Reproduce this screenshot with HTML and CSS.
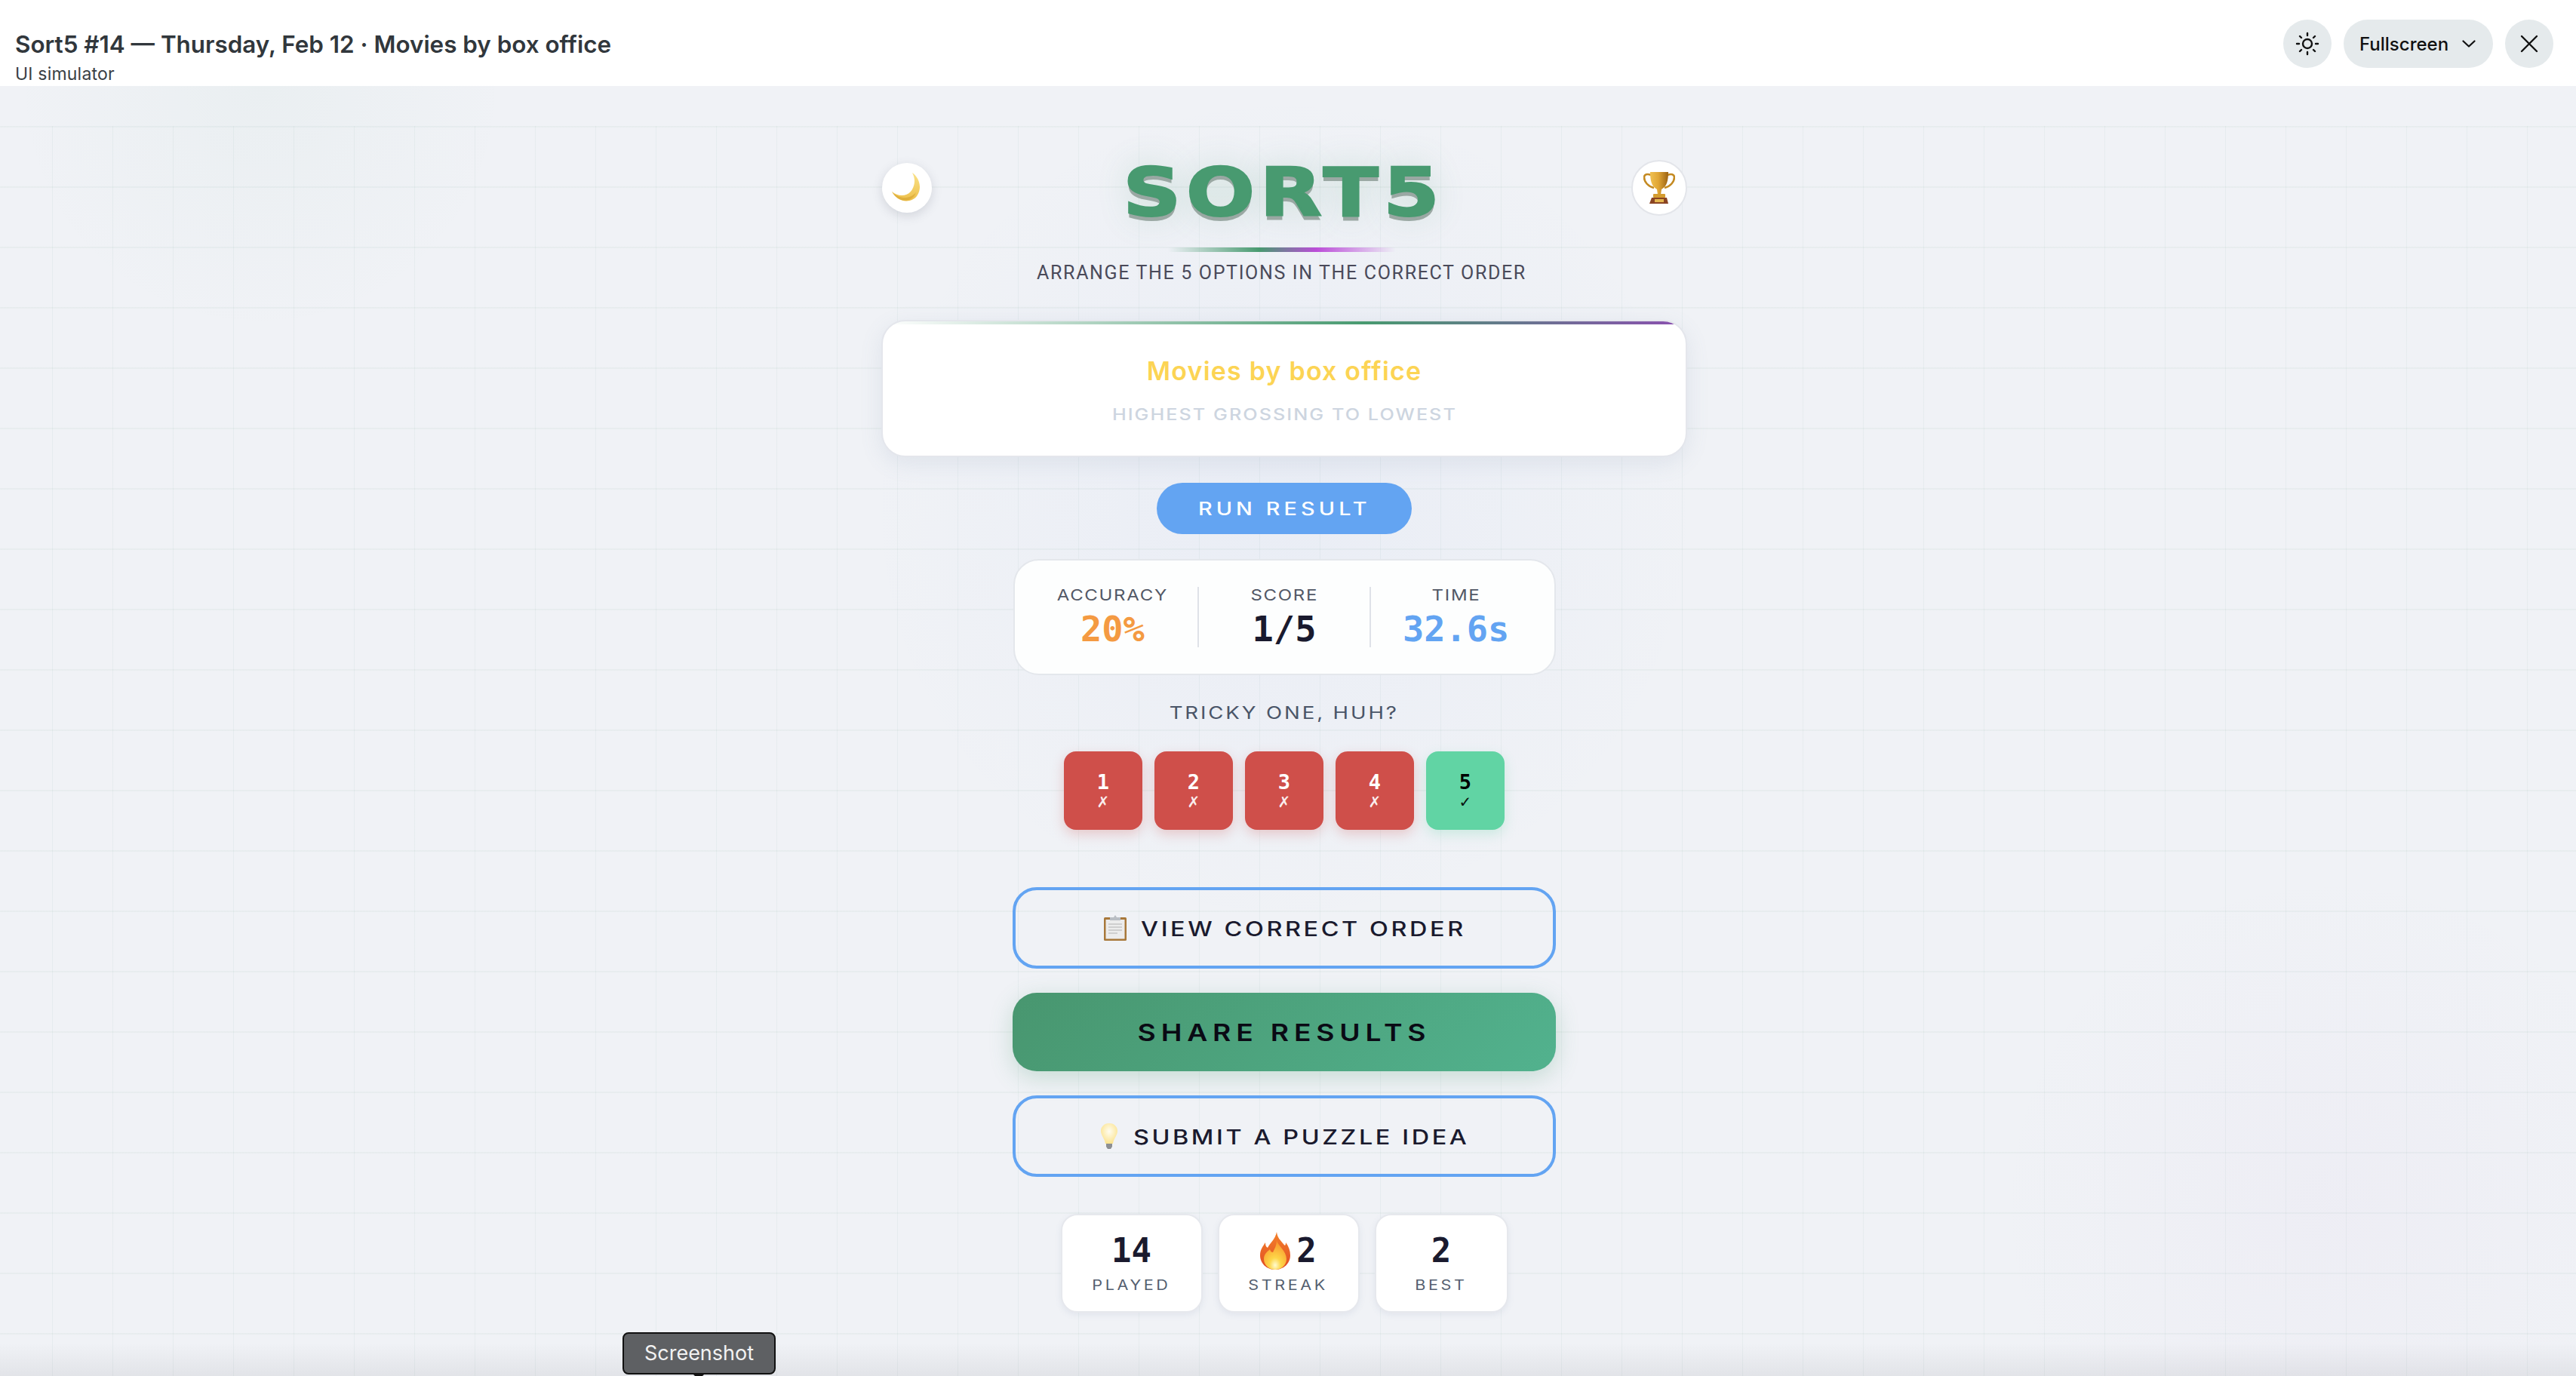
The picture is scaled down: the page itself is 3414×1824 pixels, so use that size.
FILE: index.html
```html
<!DOCTYPE html>
<html>
<head>
<meta name="viewport" content="width=device-width, initial-scale=1">
<link rel="stylesheet" href="styles.css">
</head>
<body>

<header class="topbar">
  <div class="topbar-titles">
    <div class="topbar-title">Sort5 #14 — Thursday, Feb 12 · Movies by box office</div>
    <div class="topbar-sub">UI simulator</div>
  </div>
  <div class="topbar-actions">
    <button class="roundbtn" type="button" aria-label="Theme">
      <svg width="32" height="32" viewBox="0 0 32 32" fill="none" stroke="#111" stroke-width="2.4" stroke-linecap="round">
        <circle cx="16" cy="16" r="6"/>
        <path d="M16 2v3M16 27v3M2 16h3M27 16h3M6 6l2 2M24 24l2 2M6 26l2-2M24 8l2-2"/>
      </svg>
    </button>
    <button class="pillbtn" type="button">
      Fullscreen
      <svg width="18" height="10" viewBox="0 0 18 10" fill="none" stroke="#111" stroke-width="2.2" stroke-linecap="round" stroke-linejoin="round">
        <path d="M1.5 1.5 9 8.5l7.5-7"/>
      </svg>
    </button>
    <button class="roundbtn" type="button" aria-label="Close">
      <svg width="24" height="24" viewBox="0 0 24 24" fill="none" stroke="#111" stroke-width="2.4" stroke-linecap="round">
        <path d="M2 2l20 20M22 2 2 22"/>
      </svg>
    </button>
  </div>
</header>

<main class="stage">
  <div class="game">

    <div class="hero">
      <button class="herobtn herobtn-moon" type="button" aria-label="Dark mode">
        <svg width="40" height="40" viewBox="0 0 40 40">
          <defs>
            <linearGradient id="moonfill" x1="0" y1="0" x2="0" y2="1">
              <stop offset="0" stop-color="#f9e28a"/>
              <stop offset="1" stop-color="#eec04a"/>
            </linearGradient>
          </defs>
          <path d="M27 0C36 6 41 20 33 31 26 40 9 41 0 25 10 33 22 31 27 22 31 15 31 7 27 0Z" fill="url(#moonfill)"/>
          <path d="M0 25C9 35 24 36 32 26 27 40 9 41 0 25Z" fill="#d9a734" opacity=".7"/>
        </svg>
      </button>

      <div class="hero-title">
        <h1 class="logo">SORT5</h1>
        <div class="logo-rule"></div>
        <p class="tagline">ARRANGE THE 5 OPTIONS IN THE CORRECT ORDER</p>
      </div>

      <button class="herobtn herobtn-trophy" type="button" aria-label="Leaderboard">
        <svg width="42" height="44" viewBox="0 0 42 44">
          <defs>
            <linearGradient id="cupfill" x1="0" y1="0" x2="1" y2="0">
              <stop offset="0" stop-color="#f0c050"/>
              <stop offset=".45" stop-color="#e0a636"/>
              <stop offset="1" stop-color="#9c6212"/>
            </linearGradient>
          </defs>
          <path d="M10 5C5 3 1 4 1 8c0 6 5 12 13 14M32 5c5-2 9-1 9 3 0 6-5 12-13 14" fill="none" stroke="#c48a22" stroke-width="2.6"/>
          <path d="M9 1h24c0 12-2 19-9 23l-1 7h-4l-1-7C11 20 9 13 9 1Z" fill="url(#cupfill)"/>
          <rect x="13" y="30" width="16" height="5" rx="1" fill="#d49c30"/>
          <path d="M11 35h20l2 8H8Z" fill="#8a4422"/>
          <rect x="15" y="37" width="12" height="4" fill="#e3b650"/>
        </svg>
      </button>
    </div>

    <section class="puzzle">
      <h2 class="puzzle-name">Movies by box office</h2>
      <p class="puzzle-hint wide">HIGHEST GROSSING TO LOWEST</p>
    </section>

    <button class="runbtn" type="button"><span class="wide">RUN RESULT</span></button>

    <section class="scorecard">
      <div class="score-col">
        <div class="score-label wide">ACCURACY</div>
        <div class="score-val val-orange">20%</div>
      </div>
      <div class="score-col">
        <div class="score-label wide">SCORE</div>
        <div class="score-val">1/5</div>
      </div>
      <div class="score-col">
        <div class="score-label wide">TIME</div>
        <div class="score-val val-blue">32.6s</div>
      </div>
    </section>

    <p class="remark wide">TRICKY ONE, HUH?</p>

    <div class="tiles">
      <div class="tile tile-bad"><span class="tile-num">1</span><span class="tile-mark">✗</span></div>
      <div class="tile tile-bad"><span class="tile-num">2</span><span class="tile-mark">✗</span></div>
      <div class="tile tile-bad"><span class="tile-num">3</span><span class="tile-mark">✗</span></div>
      <div class="tile tile-bad"><span class="tile-num">4</span><span class="tile-mark">✗</span></div>
      <div class="tile tile-good"><span class="tile-num">5</span><span class="tile-mark">✓</span></div>
    </div>

    <div class="actions">
      <button class="actionbtn" type="button">
        <svg width="32" height="34" viewBox="0 0 32 34">
          <rect x="1" y="3" width="30" height="31" rx="1.5" fill="#a8783a"/>
          <rect x="3.5" y="6" width="25" height="25.5" fill="#ececec"/>
          <path d="M7 12h18M7 16h18M7 20h18M7 24h12" stroke="#cfcfcf" stroke-width="2"/>
          <path d="M9 3h5l2-3 2 3h5v4H9Z" fill="#b9bec4"/>
        </svg>
        <span class="wide">VIEW CORRECT ORDER</span>
      </button>
      <button class="sharebtn" type="button"><span class="wide">SHARE RESULTS</span></button>
      <button class="actionbtn actionbtn-idea" type="button">
        <svg width="24" height="34" viewBox="0 0 24 34">
          <defs>
            <radialGradient id="bulbfill" cx=".5" cy=".4" r=".6">
              <stop offset="0" stop-color="#fffdf0"/>
              <stop offset="1" stop-color="#fbe38f"/>
            </radialGradient>
          </defs>
          <path d="M12 0C5 0 1 5 1 10c0 6 5 10 6 17h10c1-7 6-11 6-17 0-5-4-10-11-10Z" fill="url(#bulbfill)"/>
          <path d="M8 27h8v4l-2 3h-4l-2-3Z" fill="#8d8f92"/>
        </svg>
        <span class="wide">SUBMIT A PUZZLE IDEA</span>
      </button>
    </div>

    <div class="stats">
      <div class="stat stat-wide">
        <div class="stat-val">14</div>
        <div class="stat-label wide">PLAYED</div>
      </div>
      <div class="stat stat-wide">
        <div class="stat-val">
          <svg class="flame" width="40" height="50" viewBox="0 0 40 50">
            <defs>
              <linearGradient id="flameout" x1="0" y1="0" x2="0" y2="1">
                <stop offset="0" stop-color="#f4822a"/>
                <stop offset="1" stop-color="#e04a24"/>
              </linearGradient>
              <radialGradient id="flamein" cx=".5" cy=".85" r=".85">
                <stop offset="0" stop-color="#fffbd0"/>
                <stop offset=".3" stop-color="#fdd648"/>
                <stop offset="1" stop-color="#f98f2a"/>
              </radialGradient>
            </defs>
            <path d="M22 0c1 8 5 11 9 16 2 3 3 2 3-2 4 5 6 11 6 17 0 11-9 19-20 19S0 42 0 31C0 23 4 19 7 14c0 4 1 6 3 7 3-6 10-11 12-21Z" fill="url(#flameout)"/>
            <path d="M22 11c1 7 13 14 13 25 0 8-7 14-15 14S5 44 5 36c0-7 5-10 8-13 1 3 2 4 4 4 2-4 5-9 5-16Z" fill="url(#flamein)"/>
          </svg>2
        </div>
        <div class="stat-label wide">STREAK</div>
      </div>
      <div class="stat stat-narrow">
        <div class="stat-val">2</div>
        <div class="stat-label wide">BEST</div>
      </div>
    </div>

  </div>

  <div class="shot-tip">Screenshot</div>
</main>

</body>
</html>
```

FILE: styles.css
```css
* {box-sizing: border-box;}

html, body {
    margin: 0;
    height: 100%;
}

body {
    font-family: Inter, "Liberation Sans", sans-serif;
    color: #1a1a2e;
    overflow: hidden;
}

button {
    font-family: inherit;
    border: none;
    cursor: pointer;
}

h1, h2, p {margin: 0;}

/* the game's display lettering is extended, none of the installed fonts are */
.wide {
    display: inline-block;
    transform: scaleX(1.2);
}

/* top bar */
.topbar {
    height: 114px;
    background-color: #fff;
    display: flex;
    justify-content: space-between;
    padding: 26px 30px 0 20px;
}

.topbar-title {
    font-size: 31.4px;
    font-weight: 600;
    line-height: 40px;
    color: #31373c;
    margin-top: 13px;
}

.topbar-sub {
    font-size: 23px;
    line-height: 28px;
    letter-spacing: .2px;
    color: #3a4045;
    margin-top: 5px;
}

.topbar-actions {
    display: flex;
    gap: 16px;
}

.roundbtn {
    width: 64px;
    height: 64px;
    border-radius: 50%;
    background-color: #e5eaec;
    display: flex;
    align-items: center;
    justify-content: center;
    padding: 0;
}

.pillbtn {
    width: 198px;
    height: 64px;
    border-radius: 32px;
    background-color: #e5eaec;
    display: flex;
    align-items: center;
    gap: 18px;
    padding: 0 0 0 21px;
    font-size: 24px;
    font-weight: 500;
    color: #111;
}

/* page behind the game */
.stage {
    position: relative;
    height: 1710px;
    overflow: hidden;
    background-color: #f0f2f6;
    background-image:
        linear-gradient(to top, rgba(60, 60, 70, .08), rgba(60, 60, 70, 0) 44px),
        radial-gradient(circle 450px at 3090px 1486px, rgba(170, 110, 200, .035), rgba(170, 110, 200, 0)),
        radial-gradient(circle 330px at 345px 0, rgba(72, 154, 110, .035), rgba(72, 154, 110, 0)),
        radial-gradient(circle 560px at 1702px 560px, rgba(90, 130, 230, .045), rgba(90, 130, 230, 0));
    display: flex;
    justify-content: center;
    padding-right: 10px;
}

.stage::before {
    content: "";
    position: absolute;
    top: 53px;
    left: 0;
    right: 0;
    bottom: 0;
    background-image:
        linear-gradient(to right, rgba(72, 130, 110, .06) 1px, transparent 1px),
        linear-gradient(to bottom, rgba(72, 130, 110, .05) 2px, transparent 2px);
    background-size: 80px 80px;
    background-position: 69px 0;
}

.game {
    position: relative;
    width: 1068px;
    padding-top: 98px;
    display: flex;
    flex-direction: column;
    align-items: center;
}

/* hero */
.hero {
    width: 100%;
    height: 163px;
    display: flex;
    justify-content: space-between;
    align-items: flex-start;
}

.herobtn {
    border-radius: 50%;
    background-color: #fff;
    display: flex;
    align-items: center;
    justify-content: center;
    padding: 0;
}

.herobtn-moon {
    width: 66px;
    height: 66px;
    margin: 4px 0 0 1px;
    box-shadow: 0 4px 14px rgba(70, 80, 100, .18);
}

.herobtn-trophy {
    width: 74px;
    height: 74px;
    border: 2px solid #e3e5ea;
}

.hero-title {
    display: flex;
    flex-direction: column;
    align-items: center;
}

.logo {
    font-family: "DejaVu Sans", sans-serif;
    font-size: 89px;
    font-weight: 700;
    line-height: 100px;
    height: 100px;
    margin-top: -7px;
    margin-bottom: 7px;
    letter-spacing: 5px;
    margin-right: -5px;
    color: #489a70;
    -webkit-text-stroke: 2px #489a70;
    transform: scaleX(1.21);
    text-shadow: 0 6px 0 #9aa8a3, 0 0 40px rgba(72, 154, 110, .22);
}

.logo-rule {
    width: 302px;
    height: 6px;
    margin-top: 16px;
    background: linear-gradient(90deg, transparent, #489a70 40%, #bb4dd8 65%, transparent);
}

.tagline {
    font-family: Roboto, sans-serif;
    font-size: 25px;
    line-height: 30px;
    letter-spacing: 1.65px;
    color: #4a4a5a;
    margin-top: 13px;
}

/* puzzle card */
.puzzle {
    width: 1068px;
    height: 182px;
    margin-top: 49px;
    position: relative;
    overflow: hidden;
    border: 2px solid #e4e6ec;
    border-radius: 32px;
    background-color: #fff;
    box-shadow: 0 8px 30px rgba(100, 120, 160, .12);
    display: flex;
    flex-direction: column;
    align-items: center;
    padding-top: 44px;
}

.puzzle::before {
    content: "";
    position: absolute;
    top: 0;
    left: 0;
    right: 0;
    height: 4px;
    background: linear-gradient(90deg, transparent, #489a70 60%, #8b4fb0);
}

.puzzle-name {
    font-size: 34px;
    font-weight: 600;
    line-height: 44px;
    letter-spacing: 1.2px;
    color: #fcd454;
}

.puzzle-hint {
    font-size: 21px;
    font-weight: 500;
    line-height: 26px;
    letter-spacing: 1.7px;
    color: #cdd5e0;
    margin-top: 23px;
}

.runbtn {
    width: 338px;
    height: 68px;
    margin-top: 34px;
    border-radius: 34px;
    background-color: #63a4f2;
    color: #fff;
    font-size: 24px;
    font-weight: 500;
    letter-spacing: 4.25px;
}

/* score */
.scorecard {
    width: 719px;
    height: 154px;
    margin-top: 33px;
    border: 2px solid #e4e7ec;
    border-radius: 34px;
    background-color: #fdfefe;
    display: flex;
    align-items: center;
    padding: 0 17px;
}

.score-col {
    flex: 1;
    height: 80px;
    display: flex;
    flex-direction: column;
    align-items: center;
    border-right: 2px solid #dfe2e8;
}

.score-col:last-child {border-right: none;}

.score-label {
    font-size: 20px;
    font-weight: 400;
    line-height: 22px;
    letter-spacing: 1.4px;
    color: #525866;
}

.score-val {
    font-family: "DejaVu Sans Mono", monospace;
    font-size: 47px;
    font-weight: 700;
    line-height: 52px;
    margin-top: 8px;
    color: #1a1a2e;
}

.val-orange {color: #f49a42;}
.val-blue {color: #63a4f2;}

.remark {
    font-size: 23px;
    font-weight: 400;
    line-height: 30px;
    letter-spacing: 2.4px;
    color: #4a5568;
    margin-top: 35px;
}

/* per-position tiles */
.tiles {
    display: flex;
    gap: 16px;
    margin-top: 36px;
}

.tile {
    width: 104px;
    height: 104px;
    border-radius: 16px;
    display: flex;
    flex-direction: column;
    align-items: center;
    padding-top: 26px;
    font-family: "DejaVu Sans Mono", monospace;
}

.tile-bad {
    background-color: #cf4f4a;
    color: #fff;
    box-shadow: 0 6px 16px rgba(207, 79, 74, .25);
}

.tile-good {
    background-color: #61d4a4;
    color: #000;
    box-shadow: 0 6px 16px rgba(97, 212, 164, .25);
}

.tile-num {
    font-size: 27px;
    font-weight: 700;
    line-height: 30px;
}

.tile-mark {
    font-family: "DejaVu Sans", sans-serif;
    font-size: 20px;
    line-height: 22px;
    opacity: .9;
}

/* big buttons */
.actions {
    width: 720px;
    margin-top: 76px;
    display: flex;
    flex-direction: column;
    gap: 32px;
}

.actionbtn {
    height: 108px;
    border: 4px solid #63a4f2;
    border-radius: 32px;
    background-color: transparent;
    display: flex;
    align-items: center;
    justify-content: center;
    gap: 19px;
    font-size: 27px;
    font-weight: 500;
    letter-spacing: 3px;
    color: #1a1a2e;
}

.actionbtn .wide {margin: 2px 35px 0;}

.actionbtn-idea {gap: 22px;}

.sharebtn {
    height: 104px;
    border-radius: 32px;
    background-image: linear-gradient(135deg, #48966f, #52b28e);
    box-shadow: 0 8px 30px rgba(72, 150, 110, .25);
    font-size: 31px;
    font-weight: 600;
    letter-spacing: 5.7px;
    color: #0a0a14;
}

/* lifetime stats */
.stats {
    display: flex;
    gap: 20px;
    margin-top: 49px;
}

.stat {
    height: 131px;
    border: 2px solid #e6e8ed;
    border-radius: 22px;
    background-color: #fff;
    box-shadow: 0 3px 8px rgba(100, 120, 160, .1);
    display: flex;
    flex-direction: column;
    align-items: center;
    padding-top: 22px;
}

.stat-wide {width: 188px;}
.stat-narrow {width: 177px;}

.stat-val {
    font-family: "DejaVu Sans Mono", monospace;
    font-size: 44px;
    font-weight: 700;
    line-height: 50px;
    display: flex;
    align-items: center;
    height: 50px;
    gap: 8px;
    color: #1a1a2e;
}

.stat-label {
    font-size: 18px;
    font-weight: 400;
    line-height: 22px;
    letter-spacing: 3px;
    color: #555f70;
    margin-top: 10px;
}

.shot-tip {
    position: absolute;
    left: 825px;
    bottom: 2px;
    width: 203px;
    height: 56px;
    border: 2px solid #111;
    border-radius: 8px;
    background-color: #5e6063;
    color: #f2f2f2;
    font-size: 27px;
    line-height: 52px;
    text-align: center;
}

.shot-tip::after {
    content: "";
    position: absolute;
    left: 90px;
    bottom: -9px;
    border: 9px solid transparent;
    border-bottom: none;
    border-top-color: #111;
}
```
